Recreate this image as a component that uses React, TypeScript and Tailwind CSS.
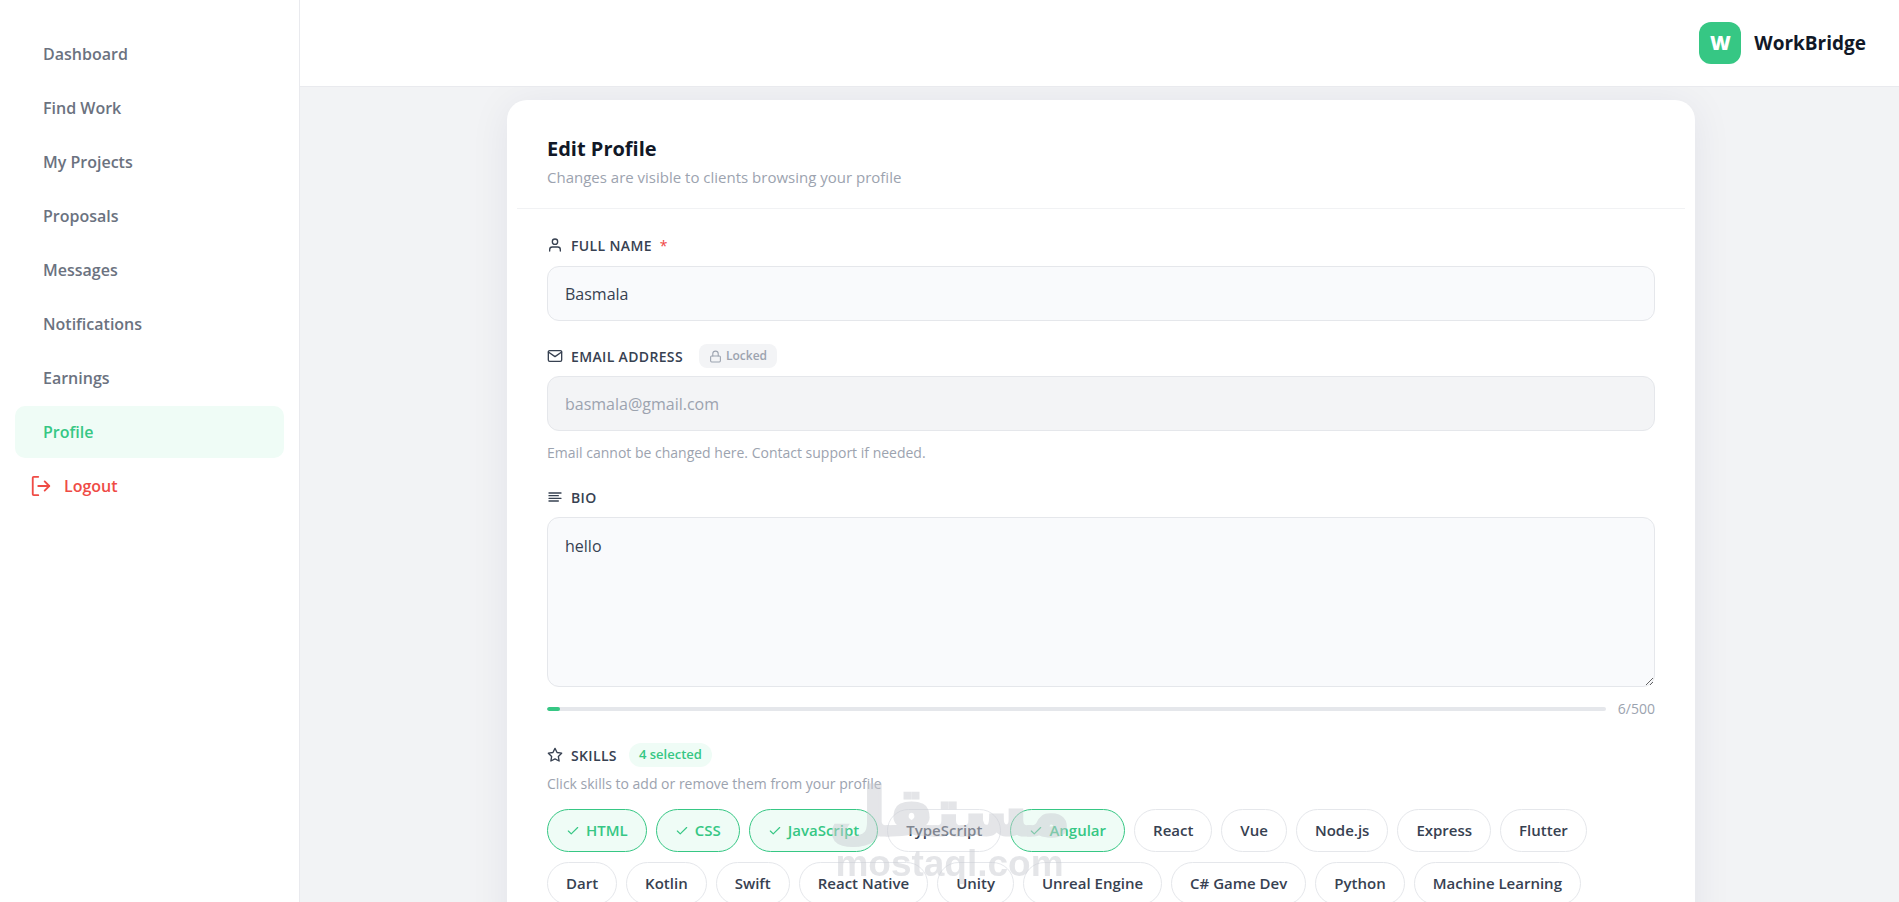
import { useState } from "react";
import type { ReactNode } from "react";

const iconProps = {
  viewBox: "0 0 24 24",
  fill: "none",
  stroke: "currentColor",
  strokeWidth: 2,
  strokeLinecap: "round",
  strokeLinejoin: "round",
} as const;

// ── SVG Icons ─────────────────────────────────────────────────────────────────
const Icons = {
  User: (
    <svg {...iconProps} width="16" height="16">
      <path d="M20 21v-2a4 4 0 0 0-4-4H8a4 4 0 0 0-4 4v2"/>
      <circle cx="12" cy="7" r="4"/>
    </svg>
  ),
  Mail: (
    <svg {...iconProps} width="16" height="16">
      <path d="M4 4h16c1.1 0 2 .9 2 2v12c0 1.1-.9 2-2 2H4c-1.1 0-2-.9-2-2V6c0-1.1.9-2 2-2z"/>
      <polyline points="22,6 12,13 2,6"/>
    </svg>
  ),
  Lock: (
    <svg {...iconProps} width="13" height="13">
      <rect x="3" y="11" width="18" height="11" rx="2"/>
      <path d="M7 11V7a5 5 0 0 1 10 0v4"/>
    </svg>
  ),
  Bio: (
    <svg {...iconProps} width="16" height="16">
      <line x1="17" y1="10" x2="3" y2="10"/>
      <line x1="21" y1="6" x2="3" y2="6"/>
      <line x1="21" y1="14" x2="3" y2="14"/>
      <line x1="17" y1="18" x2="3" y2="18"/>
    </svg>
  ),
  Star: (
    <svg {...iconProps} width="16" height="16">
      <polygon points="12 2 15.09 8.26 22 9.27 17 14.14 18.18 21.02 12 17.77 5.82 21.02 7 14.14 2 9.27 8.91 8.26 12 2"/>
    </svg>
  ),
  Check: (
    <svg {...iconProps} width="14" height="14">
      <polyline points="20 6 9 17 4 12"/>
    </svg>
  ),
  Logout: (
    <svg {...iconProps} width="22" height="22">
      <path d="M9 22H4a1 1 0 0 1-1-1V3a1 1 0 0 1 1-1h5"/>
      <polyline points="16 17 21 12 16 7"/>
      <line x1="21" y1="12" x2="9" y2="12"/>
    </svg>
  ),
};

const NAV_ITEMS = [
  "Dashboard",
  "Find Work",
  "My Projects",
  "Proposals",
  "Messages",
  "Notifications",
  "Earnings",
  "Profile",
];

const SKILLS = [
  "HTML", "CSS", "JavaScript", "TypeScript", "Angular", "React", "Vue", "Node.js", "Express", "Flutter",
  "Dart", "Kotlin", "Swift", "React Native", "Unity", "Unreal Engine", "C# Game Dev", "Python", "Machine Learning",
];

const BIO_LIMIT = 500;

function Sidebar() {
  return (
    <aside className="w-[300px] shrink-0 bg-white border-r border-[#e9eaee] px-[15px] pt-7">
      <nav className="flex flex-col gap-0.5">
        {NAV_ITEMS.map((item) => (
          <a
            key={item}
            href="#"
            className={`h-[52px] flex items-center px-7 rounded-[10px] text-[16px] font-semibold ${
              item === "Profile" ? "bg-[#effcf6] text-[#36c784]" : "text-[#6b7280]"
            }`}
          >
            {item}
          </a>
        ))}
        <button type="button" className="h-[52px] flex items-center gap-3 px-[15px] text-[16px] font-semibold text-[#ef4b45]">
          {Icons.Logout}
          Logout
        </button>
      </nav>
    </aside>
  );
}

function FieldLabel({ icon, htmlFor, text, children }: { icon: ReactNode; htmlFor: string; text: string; children?: ReactNode }) {
  return (
    <div className="flex items-center h-6 text-[#374151]">
      {icon}
      <label htmlFor={htmlFor} className="ml-2 text-[14px] font-semibold uppercase tracking-wide">{text}</label>
      {children}
    </div>
  );
}

export default function App() {
  const [name, setName] = useState("Basmala");
  const [bio, setBio] = useState("hello\n");
  const [selected, setSelected] = useState(["HTML", "CSS", "JavaScript", "Angular"]);

  const toggleSkill = (skill: string) => {
    setSelected((prev) => (prev.includes(skill) ? prev.filter((s) => s !== skill) : [...prev, skill]));
  };

  return (
    <div className="h-screen flex overflow-hidden bg-[#f2f3f5] font-['Open_Sans',sans-serif]">
      <Sidebar />

      <div className="flex-1 min-w-0 flex flex-col">
        {/* ── Top bar ── */}
        <header className="relative z-10 h-[87px] shrink-0 bg-white border-b border-[#e9eaee] flex items-center justify-end gap-[13px] px-[33px]">
          <div className="size-[42px] rounded-xl bg-[#36c784] flex items-center justify-center text-[20px] font-extrabold text-white">W</div>
          <span className="text-[19px] font-bold text-[#111827]">WorkBridge</span>
        </header>

        <main className="flex-1 min-h-0 overflow-hidden pl-[35px] pr-8 pt-[13px]">
          <form className="max-w-[1188px] mx-auto bg-white rounded-[20px] px-2.5 shadow-[0_4px_40px_rgba(30,30,80,0.07)]">
            {/* ── Card heading ── */}
            <div className="px-[30px] pt-[35px] pb-[19px] border-b border-[#f1f2f4]">
              <h1 className="text-[20px] leading-7 font-bold text-[#111827]">Edit Profile</h1>
              <p className="mt-0.5 text-[15px] leading-6 text-[#9ca3af]">Changes are visible to clients browsing your profile</p>
            </div>

            <div className="px-[30px] pt-6 pb-10">
              {/* ── Full name ── */}
              <FieldLabel icon={Icons.User} htmlFor="name" text="Full name">
                <span className="ml-2 text-[14px] text-[#ef4444]">*</span>
              </FieldLabel>
              <input
                id="name"
                value={name}
                onChange={(e) => setName(e.target.value)}
                className="block mt-[9px] w-full h-[55px] px-[17px] rounded-xl border border-[#e5e7eb] bg-[#f9fafc] text-[16px] text-[#374151] outline-none"
              />

              {/* ── Email ── */}
              <div className="mt-[23px]">
                <FieldLabel icon={Icons.Mail} htmlFor="email" text="Email address">
                  <span className="ml-4 h-6 px-2.5 flex items-center gap-1 rounded-lg bg-[#f3f4f6] text-[12px] font-semibold text-[#9ca3af]">
                    {Icons.Lock}
                    Locked
                  </span>
                </FieldLabel>
                <input
                  id="email"
                  type="email"
                  value="basmala@gmail.com"
                  disabled
                  className="block mt-2 w-full h-[55px] px-[17px] rounded-xl border border-[#e5e7eb] bg-[#f3f4f6] text-[16px] text-[#9ca3af]"
                />
                <p className="mt-2.5 text-[14px] leading-6 text-[#9ca3af]">Email cannot be changed here. Contact support if needed.</p>
              </div>

              {/* ── Bio ── */}
              <div className="mt-5">
                <FieldLabel icon={Icons.Bio} htmlFor="bio" text="Bio" />
                <textarea
                  id="bio"
                  value={bio}
                  onChange={(e) => setBio(e.target.value)}
                  maxLength={BIO_LIMIT}
                  className="block mt-2 w-full h-[170px] px-[17px] py-4 rounded-xl border border-[#e5e7eb] bg-[#f9fafc] text-[16px] text-[#374151] resize-y outline-none"
                />
                <div className="mt-2.5 flex items-center gap-3">
                  <div className="flex-1 h-1 rounded-full bg-[#e5e7eb] overflow-hidden">
                    <div className="h-full rounded-full bg-[#36c784]" style={{ width: `${(bio.length / BIO_LIMIT) * 100}%` }} />
                  </div>
                  <span className="text-[14px] leading-6 text-[#9ca3af]">{bio.length}/{BIO_LIMIT}</span>
                </div>
              </div>

              {/* ── Skills ── */}
              <div className="mt-[22px]">
                <div className="flex items-center h-6 text-[#374151]">
                  {Icons.Star}
                  <h2 className="ml-2 text-[14px] font-semibold uppercase tracking-wide">Skills</h2>
                  <span className="ml-3 h-6 px-2.5 flex items-center rounded-full bg-[#effcf6] text-[13px] font-semibold text-[#36c784]">
                    {selected.length} selected
                  </span>
                </div>
                <p className="mt-[5px] text-[14px] leading-6 text-[#9ca3af]">Click skills to add or remove them from your profile</p>
                <div className="mt-[13px] flex flex-wrap gap-x-[9px] gap-y-2.5">
                  {SKILLS.map((skill) => {
                    const active = selected.includes(skill);
                    return (
                      <button
                        key={skill}
                        type="button"
                        aria-pressed={active}
                        onClick={() => toggleSkill(skill)}
                        className={`h-[43px] px-[18px] flex items-center gap-1.5 rounded-full border text-[15px] font-semibold ${
                          active ? "border-[#36c784] bg-[#effcf6] text-[#36c784]" : "border-[#e5e7eb] bg-white text-[#374151]"
                        }`}
                      >
                        {active && Icons.Check}
                        {skill}
                      </button>
                    );
                  })}
                </div>
              </div>
            </div>
          </form>
        </main>
      </div>

      {/* ── Watermark ── */}
      <div className="fixed z-20 bottom-5 left-1/2 -translate-x-1/2 flex flex-col items-center opacity-50 text-[#c9cbd1] pointer-events-none select-none">
        <span lang="ar" dir="rtl" className="font-['DejaVu_Sans',sans-serif] text-[66px] leading-[66px] font-bold [-webkit-text-stroke:3px_#c9cbd1]">مستقل</span>
        <span className="font-['Liberation_Sans',sans-serif] text-[37px] leading-9 font-bold">mostaql.com</span>
      </div>
    </div>
  );
}
